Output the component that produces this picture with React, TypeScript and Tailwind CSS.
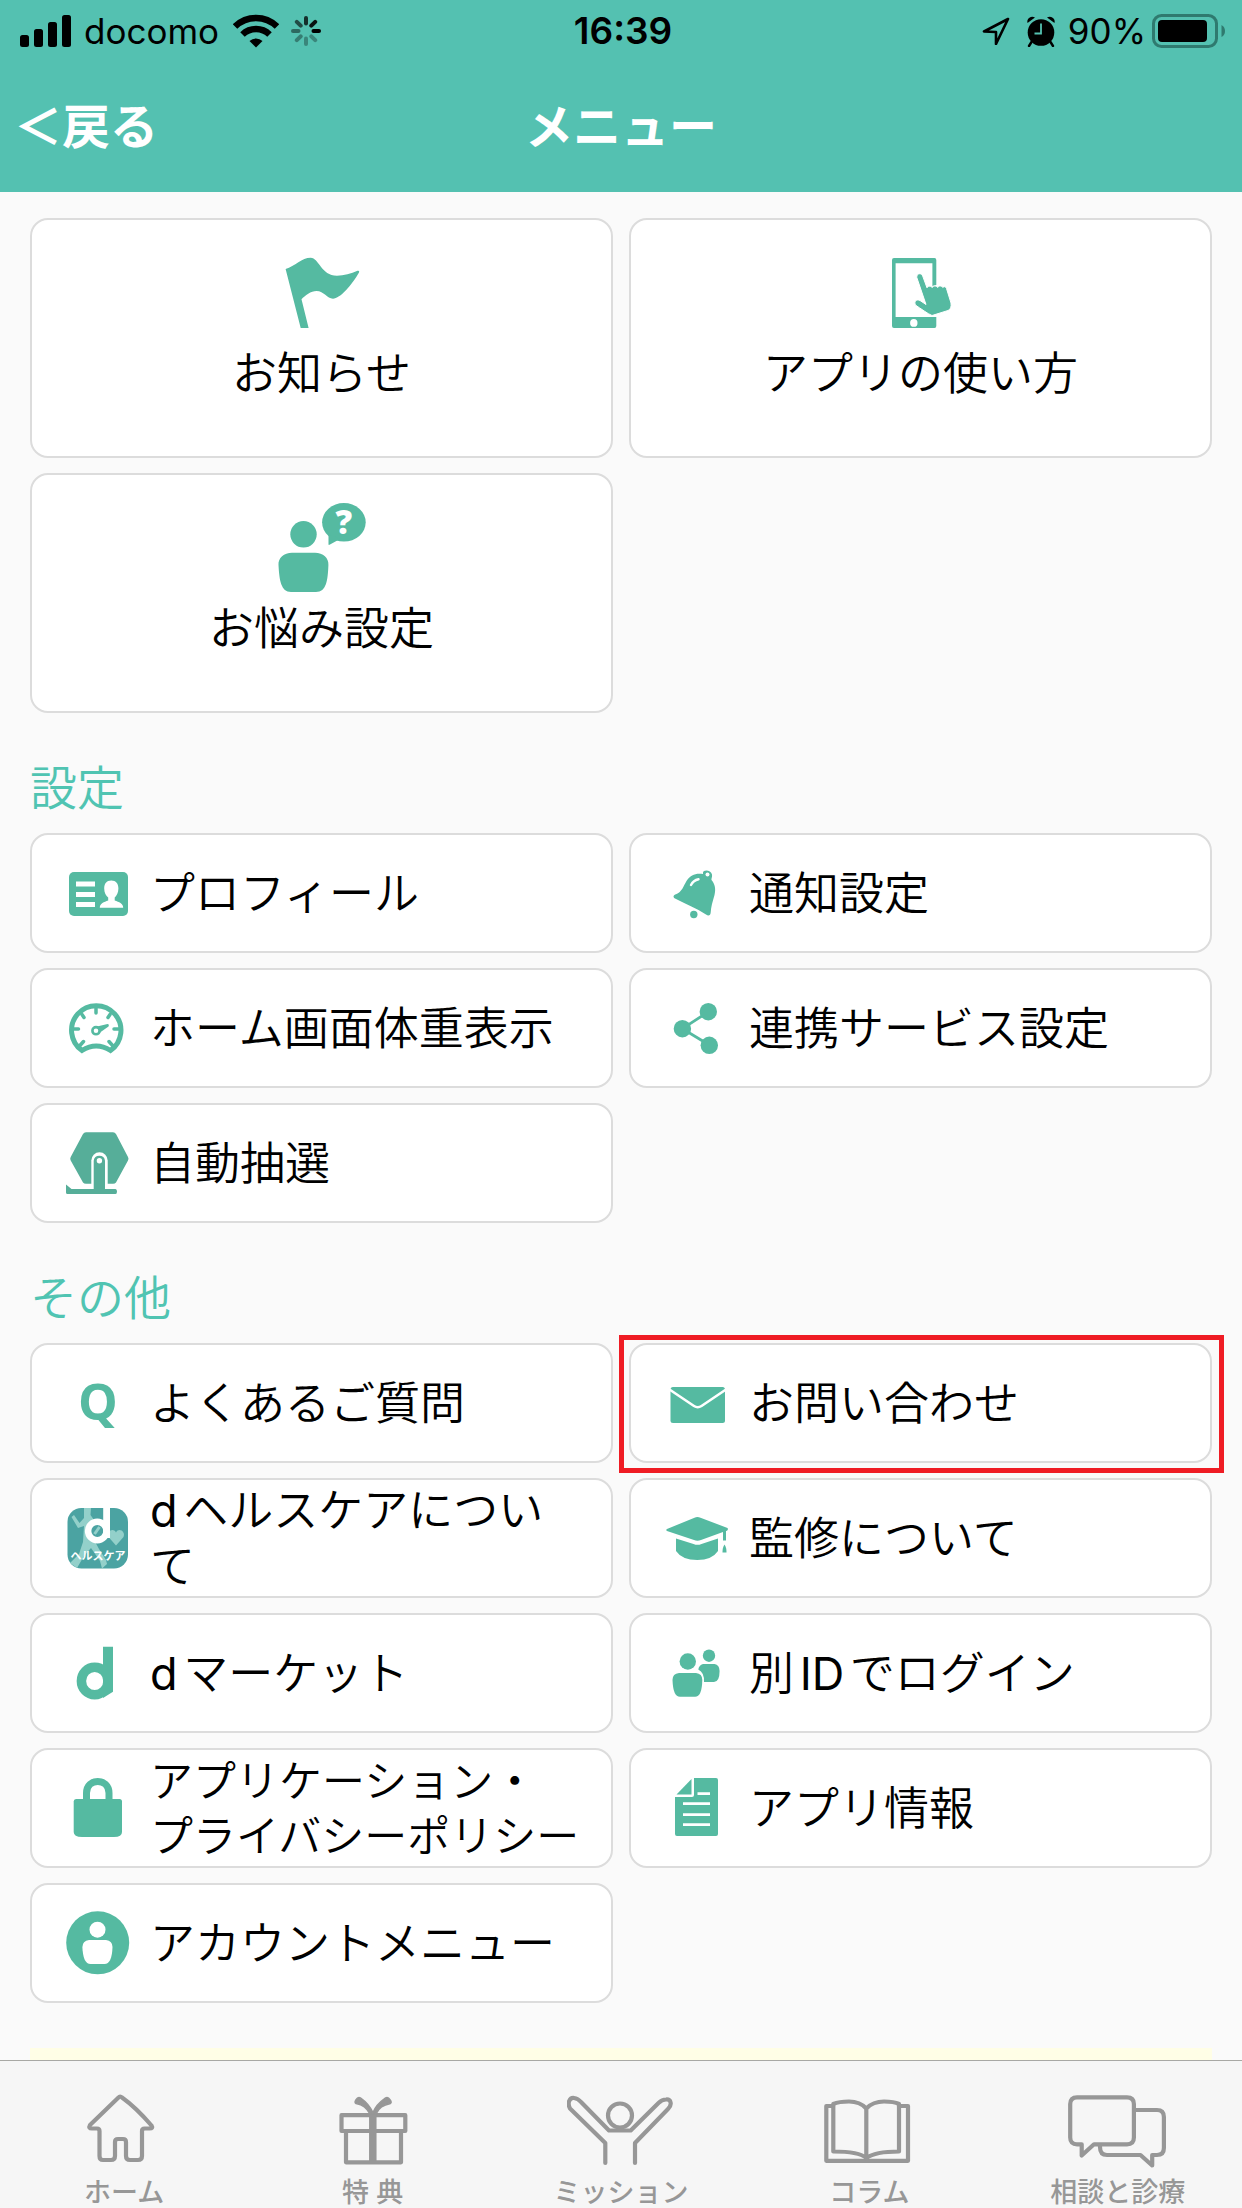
import React from 'react';

interface MenuItem {
  label: React.ReactNode;
  icon: React.ReactNode;
  small?: boolean;
  highlighted?: boolean;
}

const Icon: React.FC<{ children: React.ReactNode }> = ({ children }) => (
  <svg viewBox="0 0 64 64" className="size-16" fill="currentColor" aria-hidden="true">{children}</svg>
);

const BigIcon: React.FC<{ children: React.ReactNode }> = ({ children }) => (
  <svg viewBox="0 0 90 90" className="size-[90px] text-[#55baa1]" fill="currentColor" aria-hidden="true">{children}</svg>
);

const TabIcon: React.FC<{ children: React.ReactNode }> = ({ children }) => (
  <svg
    viewBox="0 0 108 80"
    className="h-20 w-[108px]"
    fill="none"
    stroke="currentColor"
    strokeWidth="4.2"
    strokeLinejoin="round"
    strokeLinecap="round"
    aria-hidden="true"
  >
    {children}
  </svg>
);

const TOP_ITEMS: MenuItem[] = [
  {
    label: 'お知らせ',
    icon: (
      <BigIcon>
        <path d="M8.6 21C18 18 25 9.700 33.600 9.700C42 9.700 44 27.700 60 27.700C67 27.700 74 25.500 80.500 22.800C82 22.300 82.500 23 82 24.500C75 37 63 50.700 56 50.700C50 50.700 47 43 39.500 43C34 43 28 47.500 24.500 51.300L31.600 80H23.700Z" />
      </BigIcon>
    ),
  },
  {
    label: 'アプリの使い方',
    icon: (
      <BigIcon>
        <path
          fillRule="evenodd"
          d="M18 10H58.500Q60.300 10 60.300 12V37L56.400 38V15.300H19.600V69H60.300V78Q60.300 80 58.500 80H18Q16 80 16 78V12Q16 10 18 10ZM37.800 71A3.700 3.900 0 1 0 37.800 78.800A3.700 3.900 0 1 0 37.800 71Z"
        />
        <path
          stroke="white"
          strokeWidth="1"
          d="M40.800 29.500C40.200 25 45.500 24.500 46.700 28L51 39.800C51.500 38 55 37.500 56.200 39.500C57 37.500 60.500 37.500 61.700 39.500C62.500 37.500 65.500 37.500 66.800 39.500C68 38 69.800 38.500 70.500 40.500L75 55C75.500 59 74.500 61.500 72 62.500L56 67.500C52 66 44 60 40 57.500C37 54 40.500 50.500 44 52.500L50 56.500Z"
        />
      </BigIcon>
    ),
  },
  {
    label: 'お悩み設定',
    icon: (
      <BigIcon>
        <circle cx="26.500" cy="31.300" r="13.200" />
        <path d="M15 49.700H38C46 49.700 52 55 51.400 62C50.800 77 49.500 89 39 89H14C4 89 2.300 77 1.500 62C1 55 7 49.700 15 49.700Z" />
        <ellipse cx="66.900" cy="19.300" rx="21.800" ry="19.300" />
        <path d="M51.500 31V41.200Q51.500 42.500 53 41.500L63 36Z" />
        <text x="66.900" y="31" textAnchor="middle" fill="white" className="font-['Open_Sans',sans-serif] text-[33px] font-extrabold">?</text>
      </BigIcon>
    ),
  },
];

const SETTINGS: MenuItem[] = [
  {
    label: 'プロフィール',
    icon: (
      <Icon>
        <rect x="3" y="11" width="59" height="44" rx="5" />
        <g fill="white">
          <path d="M10 20.500H29V25.500H10ZM10 31H29V36H10ZM10 41H29V46H10Z" />
          <path d="M45.300 19.500C50 19.500 52.400 22.500 52.400 27.500C52.400 31.500 50.500 35 48.700 36.500V39.500C53 41 57.200 42.500 57.200 46.800H33.800C33.800 42.500 38 41 42.200 39.500V36.500C40 35 38.200 31.500 38.200 27.500C38.200 22.500 40.500 19.500 45.300 19.500Z" />
        </g>
      </Icon>
    ),
  },
  {
    label: '通知設定',
    icon: (
      <Icon>
        <path d="M38 11.500C38 8.500 46 8.500 47 13.500C47.500 16 46 18 46.500 19C50 23 51 28 49.500 34C47.500 41 46 46 45.700 51.500C45.500 54.500 43.500 55.500 41 53.500C31 47 21 43 10 37.500C7.500 36 8.500 34 11 33.200C17 31 18.500 25 21.500 20C25.500 13.500 31 12 38 13Z" />
        <circle cx="42.500" cy="13.500" r="2" fill="white" />
        <path d="M26 24C27.500 21 30 19 33.500 18.300" fill="none" stroke="white" strokeWidth="2.400" strokeLinecap="round" />
        <circle cx="28.800" cy="53.500" r="3.700" />
      </Icon>
    ),
  },
  {
    label: 'ホーム画面体重表示',
    icon: (
      <Icon>
        <g fill="none" stroke="currentColor">
          <path d="M16 54.500A24.700 24.700 0 1 1 44.500 54.500Q30.200 45.500 16 54.500Z" strokeWidth="5" />
          <path
            d="M30 11V17M6 33H12.500M48 33H54M16 18.500L18 21.500M44 18.500L42 21.500M13.500 50L17.500 45.500M47 50L43 45.500"
            strokeWidth="3.500"
            strokeLinecap="round"
          />
          <circle cx="30" cy="34.700" r="3.600" strokeWidth="2.600" />
        </g>
        <path d="M31 30.500L41.500 28Q43.500 28 42.500 30.500L34 36.500Z" />
      </Icon>
    ),
  },
  {
    label: '連携サービス設定',
    icon: (
      <Icon>
        <path d="M43.500 15.700L17.400 32.700L44.300 49" fill="none" stroke="currentColor" strokeWidth="2.800" />
        <circle cx="17.400" cy="32.700" r="8.700" />
        <circle cx="43.300" cy="15.700" r="8.700" />
        <circle cx="44.300" cy="49.300" r="8.700" />
      </Icon>
    ),
  },
  {
    label: '自動抽選',
    icon: (
      <Icon>
        <g className="text-[#56ae99]">
          <path d="M20 1.300H47Q49 1.300 50 3L62 26Q63 27.700 62 29.500L50 51.500Q49 52.800 47 52.800H20Q18 52.800 17 51.500L4.700 29.500Q3.700 27.700 4.700 26L17 3Q18 1.300 20 1.300Z" />
          <path d="M25.300 54V29.500A8.200 8.200 0 0 1 41.700 29.500V54Z" fill="white" />
          <path d="M27.700 58V29.700A5.700 5.700 0 0 1 39 29.700V58H49.500Q51 58 51 60.500T49.500 63H1.500Q0 63 0 61.500V53.500L5.500 58Z" />
          <circle cx="33.400" cy="29.700" r="2.700" fill="white" />
        </g>
      </Icon>
    ),
  },
];

const OTHERS: MenuItem[] = [
  {
    label: 'よくあるご質問',
    icon: <span className="pb-1 font-['Open_Sans',sans-serif] text-[50px] leading-[60px] font-bold" aria-hidden="true">Q</span>,
  },
  {
    label: 'お問い合わせ',
    highlighted: true,
    icon: (
      <Icon>
        <rect x="5.500" y="16" width="54.500" height="36" rx="2.500" />
        <path d="M4.500 18.500L29 35Q32.700 37.500 36.500 35L61 18.500" fill="none" stroke="white" strokeWidth="2.600" />
      </Icon>
    ),
  },
  {
    label: <><span className="font-normal">d</span>ヘルスケアについ<br />て</>,
    icon: (
      <Icon>
        <rect x="1.500" y="2" width="60.500" height="60.500" rx="14" fill="#4ba3a2" />
        <g fill="#93d0ca">
          <path d="M18 2H25L24.500 9L28 14L26 30L33 43L40 54L41 58L36 62.500L34 55L25 42L18 50L11 62L4 57L13 48L17 36L18 20L12 22L5.500 11L8 9L13.500 17L18 12Z" />
          <path d="M50 39.500L42.500 31C40 26 47 21 50 26.500C53 21 60 26 57.500 31Z" />
        </g>
        <circle cx="31.300" cy="25" r="9.200" fill="#4ba3a2" stroke="white" strokeWidth="6.500" />
        <path d="M28.500 28L33.500 21" stroke="#93d0ca" strokeWidth="3" />
        <rect x="37.200" y="2" width="6.800" height="30" fill="white" />
        <text x="32" y="53.500" textAnchor="middle" fill="white" className="font-['Noto_Sans_CJK_JP',sans-serif] text-[11px] font-bold">ヘルスケア</text>
      </Icon>
    ),
  },
  {
    label: '監修について',
    icon: (
      <Icon>
        <path d="M2 23L29.500 11.700Q32.300 10.500 35.500 11.700L62.500 22Q63.500 23.500 62 24.700L61 25V34.500H58V26L36 34Q32.300 35.500 29 34L2 25Q0.500 24 2 23Z" />
        <path d="M11 32.500L28.500 38Q32.500 39.700 36.500 38L53 32.500V45Q47 54 32.300 54Q17 54 11 45Z" />
        <path d="M59.500 38.500C61 41 61.500 42.500 61.500 46.500H57.500C57.500 42.500 58 41 59.500 38.500Z" />
      </Icon>
    ),
  },
  {
    label: <><span className="font-normal">d</span>マーケット</>,
    icon: (
      <Icon>
        <ellipse cx="28.700" cy="40" rx="13.300" ry="13.800" fill="none" stroke="currentColor" strokeWidth="9.500" />
        <path d="M37 5.700H47V50.700L37 57Z" />
      </Icon>
    ),
  },
  {
    label: <>別<span className="font-normal">ID</span>でログイン</>,
    icon: (
      <Icon>
        <circle cx="44" cy="14.700" r="6.200" />
        <path d="M38 23H49.500Q54.600 24 54.600 30Q54.500 41 49 41H39Q39.500 31.500 33.300 28.500Q34 24 38 23Z" />
        <circle cx="22.800" cy="20.500" r="8.200" />
        <path d="M14 32H31Q37.300 32.500 37.300 39Q37 55.800 30 55.800H15Q8 55.800 7.500 39Q7.500 32.500 14 32Z" />
      </Icon>
    ),
  },
  {
    label: <>アプリケーション・<br />プライバシーポリシー</>,
    small: true,
    icon: (
      <Icon>
        <path d="M20.500 26V17C20.500 1.500 43 1.500 43 17V26" fill="none" stroke="currentColor" strokeWidth="7" />
        <path d="M10 23H53.500Q56 23 56 25.500V56Q56 61 48 61H16Q7.700 61 7.700 56V25.500Q7.700 23 10 23Z" />
      </Icon>
    ),
  },
  {
    label: 'アプリ情報',
    icon: (
      <Icon>
        <path d="M26.500 3V18.500H11.500Z" />
        <path d="M29 2H51Q53 2 53 4V58Q53 60 51 60H12Q10 60 10 58V21H27Q29 21 29 19Z" />
        <path d="M32.500 17.600H45M18 27.600H45M18 38.600H45M18 48.600H45" stroke="white" strokeWidth="2.600" />
      </Icon>
    ),
  },
  {
    label: 'アカウントメニュー',
    icon: (
      <Icon>
        <circle cx="31.700" cy="31.800" r="31.500" />
        <circle cx="31.500" cy="18.700" r="8" fill="white" />
        <path d="M23 29H40Q46.500 30 46.500 36Q46 53 38.500 53H24.500Q17 53 16.400 36Q16.500 30 23 29Z" fill="white" />
      </Icon>
    ),
  },
];

const TABS: MenuItem[] = [
  {
    label: 'ホーム',
    icon: (
      <TabIcon>
        <path d="M48.500 7.500L20 35Q18 38.500 22 38.500H27Q29.500 38.500 29.500 41V66Q29.500 70 33 70H41Q45 70 45 66V52Q45 49 48 49H53Q56 49 56 52V66Q56 70 60 70H68Q72 70 72 66V41Q72 38.500 74.500 38.500H79.500Q83.500 38.500 81.500 35.500Q66 17.500 52 7.500Q50 5.500 48.500 7.500Z" />
      </TabIcon>
    ),
  },
  {
    label: '特 典',
    icon: (
      <TabIcon>
        <path d="M22.500 25.200H86.300V41H22.500ZM27 41V72.300H82V41" />
        <path d="M53.800 26V72" strokeWidth="7.500" strokeLinecap="butt" />
        <path
          d="M51 24C47.500 17.500 44 15 37 13.500Q34.500 12 38.500 8Q40.500 6.500 43 9C48 12.500 51.500 17.500 54 22.500C56 17.500 60 12.500 65 9Q67.500 6.500 69.500 8Q73.500 12 71.500 13.500C64 15 60 17.500 57 24Z"
          fill="currentColor"
          strokeWidth="1.500"
        />
      </TabIcon>
    ),
  },
  {
    label: 'ミッション',
    icon: (
      <TabIcon>
        <circle cx="53" cy="25.500" r="12" />
        <path d="M38.300 73V53L3 18.500C0 13 2.500 7.500 7 8Q11 8.500 14 12L42 40.500H63.700L91.500 13Q95 9.500 99 9.500C104 9 105.500 14.500 101 19L68 53V73" />
      </TabIcon>
    ),
  },
  {
    label: 'コラム',
    icon: (
      <TabIcon>
        <path d="M18 16H11.300V70.800H93V16H84" />
        <path d="M51.300 18.500Q45 11.500 34 11.500Q24 11.500 18.300 14V61.500Q44 61.500 51.300 68Q60 61.500 84 61.500V14Q79 11.500 69 11.500Q58 11.500 51.300 18.500V69" />
      </TabIcon>
    ),
  },
  {
    label: '相談と診療',
    icon: (
      <TabIcon>
        <path d="M13 7.300H63Q69.900 7.300 69.900 14V47.500Q69.900 54.300 63 54.300H30L17.700 65.500V54.300H13Q6.200 54.300 6.200 47.500V14Q6.200 7.300 13 7.300Z" />
        <path d="M70 20H93Q99.900 20 99.900 27V58Q99.900 65 93 65H88.200V75.500L76.500 65H43Q36 65 36 57V55" />
      </TabIcon>
    ),
  },
];

const StatusBar: React.FC = () => (
  <div className="grid h-[62px] grid-cols-[1fr_auto_1fr] items-center pr-4 pl-5 font-['Inter',sans-serif] text-[35px] leading-[62px] font-normal text-black">
    <div className="flex items-center">
      <svg viewBox="0 0 52 34" className="h-[34px] w-[52px]" aria-hidden="true">
        <rect x="0" y="21" width="9" height="12" rx="2.500" />
        <rect x="14" y="15" width="9" height="18" rx="2.500" />
        <rect x="28" y="8" width="9" height="25" rx="2.500" />
        <rect x="42" y="1" width="9" height="32" rx="2.500" />
      </svg>
      <span className="ml-3">docomo</span>
      <svg viewBox="0 0 46 34" className="ml-3.5 h-[34px] w-[46px]" fill="none" stroke="black" aria-hidden="true">
        <path d="M2 12.500A30 30 0 0 1 44 12.500" strokeWidth="6.500" />
        <path d="M9.500 20.500A19.500 19.500 0 0 1 36.500 20.500" strokeWidth="6.500" />
        <path d="M16.500 27A9.500 9.500 0 0 1 29.500 27L23 33.500Z" fill="black" stroke="none" />
      </svg>
      <svg viewBox="-15 -15 30 30" className="ml-3 size-[30px]" stroke="black" strokeWidth="4" strokeLinecap="round" aria-hidden="true">
        <path d="M0 -7.500V-13" opacity="0.750" />
        <path d="M5.300 -5.300L9.200 -9.200" opacity="0.900" />
        <path d="M7.500 0H13" />
        <path d="M5.300 5.300L9.200 9.200" opacity="0.300" />
        <path d="M0 7.500V13" opacity="0.300" />
        <path d="M-5.300 5.300L-9.200 9.200" opacity="0.350" />
        <path d="M-7.500 0H-13" opacity="0.450" />
        <path d="M-5.300 -5.300L-9.200 -9.200" opacity="0.600" />
      </svg>
    </div>
    <span className="text-[37px] font-semibold">16:39</span>
    <div className="flex items-center justify-end">
      <svg viewBox="0 0 28 28" className="size-7" fill="none" stroke="black" strokeWidth="2.600" strokeLinejoin="round" aria-hidden="true">
        <path d="M26 2L2 14.500L14 15V27Z" />
      </svg>
      <svg viewBox="0 0 30 32" className="ml-4 h-8 w-[30px]" aria-hidden="true">
        <circle cx="15" cy="17.500" r="13.300" />
        <path d="M1.500 8A5 5 0 0 1 9 2.500ZM28.500 8A5 5 0 0 0 21 2.500Z" />
        <path d="M5.500 27L3 31M24.500 27L27 31" stroke="black" strokeWidth="2.400" strokeLinecap="round" />
        <path d="M15 8.500V18.500H8.500" fill="none" stroke="#54c1b1" strokeWidth="1.800" />
      </svg>
      <span className="ml-3">90%</span>
      <svg viewBox="0 0 74 34" className="ml-1.5 h-[34px] w-[74px]" aria-hidden="true">
        <rect x="1.500" y="1.500" width="63" height="31" rx="8" fill="none" stroke="#2f7a6f" strokeWidth="3" />
        <rect x="6" y="6" width="49" height="22" rx="4" />
        <path d="M69.500 11Q73 13 73 17T69.500 23Z" fill="#2f7a6f" />
      </svg>
    </div>
  </div>
);

const TopCard: React.FC<{ item: MenuItem }> = ({ item }) => (
  <button type="button" className="flex h-60 flex-col items-center rounded-[18px] border-2 border-[#dcdcdc] bg-white pt-7">
    {item.icon}
    <span className="mt-1.5 text-[45px] leading-[60px]">{item.label}</span>
  </button>
);

const MenuCard: React.FC<{ item: MenuItem }> = ({ item }) => (
  <button type="button" className="relative flex h-[120px] items-center gap-5 rounded-[18px] border-2 border-[#dcdcdc] bg-white pl-[34px] text-left">
    <span className="flex size-16 shrink-0 items-center justify-center text-[#55baa1]">{item.icon}</span>
    <span className={item.small ? 'pt-0.5 text-[43px] leading-[55px] whitespace-nowrap' : 'pt-0.5 text-[45px] leading-[56px] whitespace-nowrap'}>
      {item.label}
    </span>
    {item.highlighted && <span className="absolute -top-2.5 -right-3.5 -bottom-3 -left-3 border-5 border-[#ef1c24]" />}
  </button>
);

const MenuSection: React.FC<{ title: string; items: MenuItem[] }> = ({ title, items }) => (
  <section>
    <h2 className="pt-10 pb-2.5 text-[47px] leading-[70px] text-[#50c4b2]">{title}</h2>
    <div className="grid grid-cols-2 gap-x-4 gap-y-[15px]">
      {items.map((item, index) => (
        <MenuCard key={index} item={item} />
      ))}
    </div>
  </section>
);

const App: React.FC = () => (
  <div
    className="flex min-h-screen flex-col bg-[#fafafa] font-['Inter','Noto_Sans_CJK_JP',sans-serif] font-[350] text-black [text-autospace:normal]"
    lang="ja"
  >
    <header className="bg-[#54c1b1]">
      <StatusBar />
      <div className="grid h-[130px] grid-cols-[1fr_auto_1fr] items-center px-3.5 text-[48px] leading-[64px] font-bold text-white">
        <button type="button" className="justify-self-start">＜戻る</button>
        <h1>メニュー</h1>
      </div>
    </header>

    <main className="flex grow flex-col px-[30px] pt-[26px]">
      <div className="grid grid-cols-2 gap-x-4 gap-y-[15px]">
        {TOP_ITEMS.map((item, index) => (
          <TopCard key={index} item={item} />
        ))}
      </div>
      <MenuSection title="設定" items={SETTINGS} />
      <MenuSection title="その他" items={OTHERS} />
      <div className="mt-[45px] min-h-3 grow bg-[#fffee6]" />
    </main>

    <nav className="grid grid-cols-5 border-t border-[#a8a8a4] bg-[#f6f6f6] pt-[29px] text-[#979797]">
      {TABS.map((tab, index) => (
        <a key={index} href="#" className="flex flex-col items-center gap-2 text-[27px] leading-[30px] font-medium whitespace-nowrap">
          {tab.icon}
          {tab.label}
        </a>
      ))}
    </nav>
  </div>
);

export default App;
